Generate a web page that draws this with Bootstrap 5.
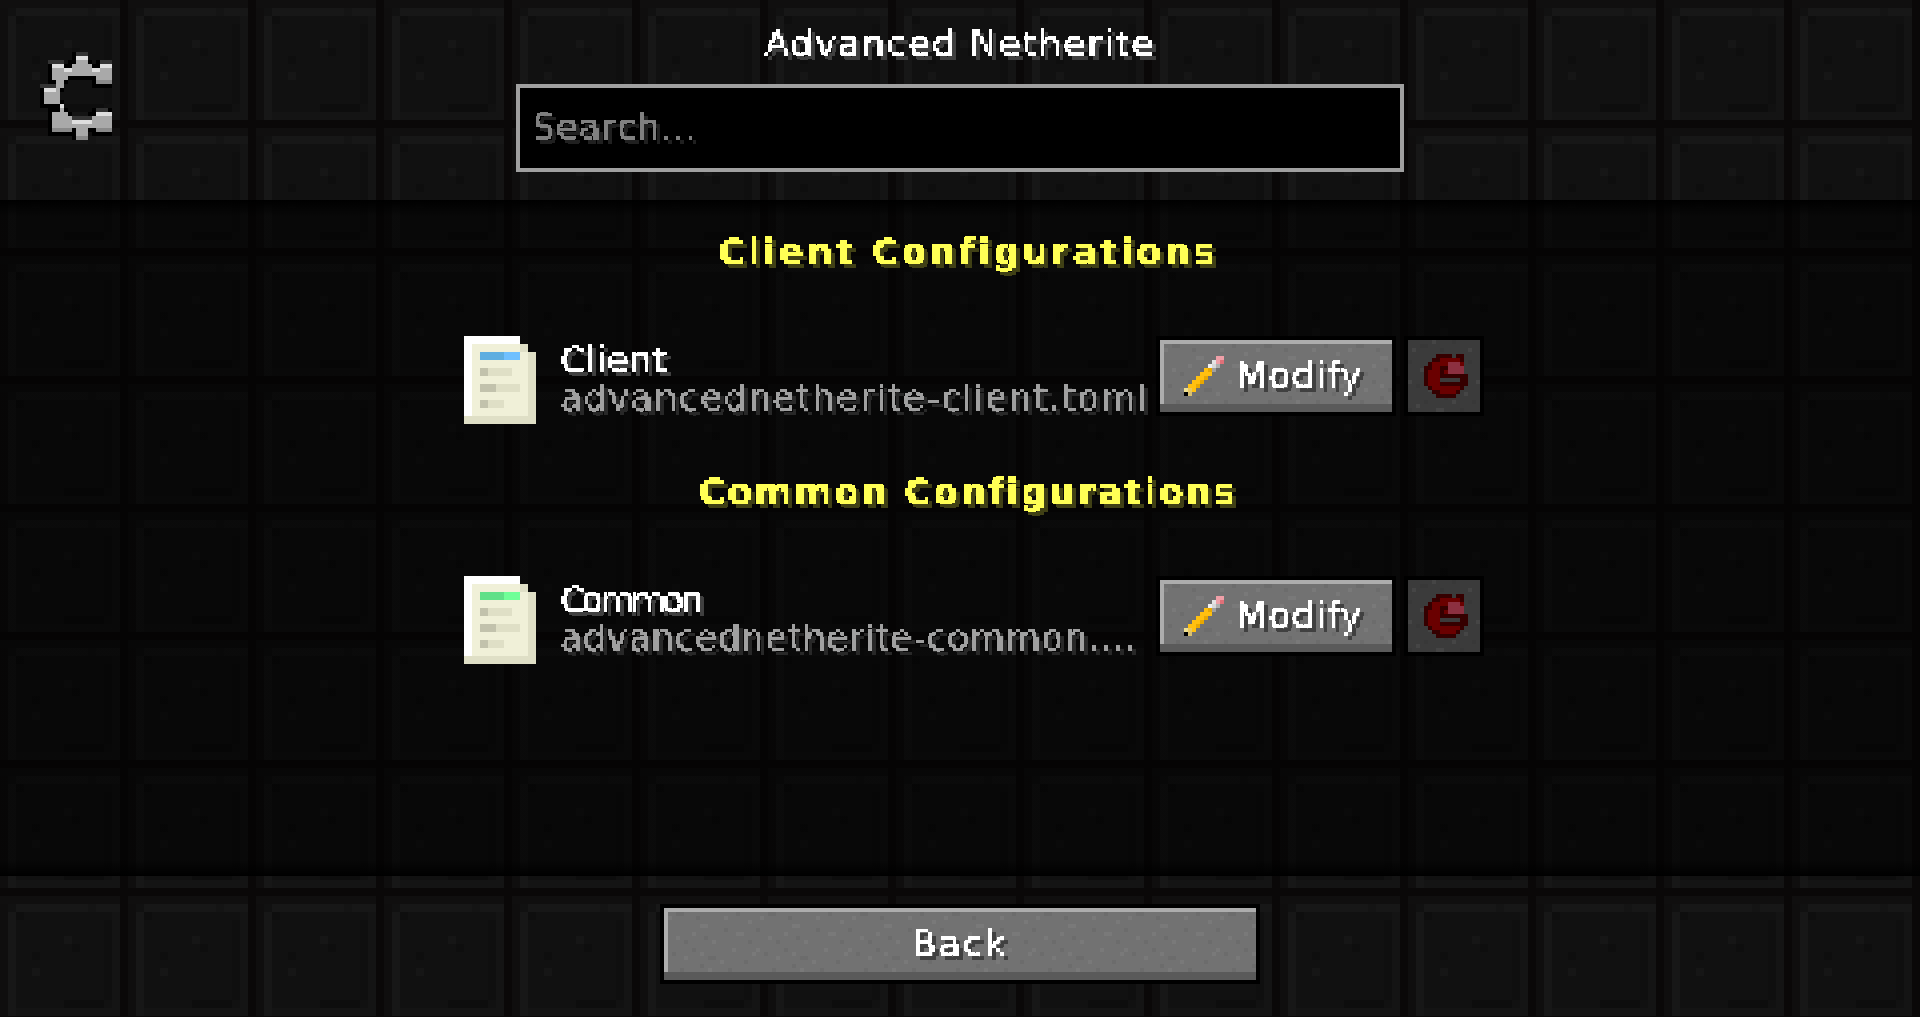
<!DOCTYPE html>
<html lang="en">
<head>
<meta charset="utf-8">
<title>Advanced Netherite</title>
<link href="https://cdn.jsdelivr.net/npm/bootstrap@5.3.0/dist/css/bootstrap.min.css" rel="stylesheet">
<style>
html,body{height:100%;overflow:hidden}
body{
  background-color:#111;
  background-image:url("data:image/svg+xml,%3Csvg xmlns='http://www.w3.org/2000/svg' width='128' height='128' shape-rendering='crispEdges'%3E%3Crect width='128' height='128' fill='%23111'/%3E%3Crect width='8' height='128' fill='%230f0e0e'/%3E%3Crect width='128' height='8' fill='%23100f0f'/%3E%3Crect x='8' y='112' width='112' height='8' fill='%23141414'/%3E%3Crect x='112' y='16' width='8' height='104' fill='%23141414'/%3E%3Crect x='8' y='16' width='8' height='104' fill='%23171717'/%3E%3Crect x='16' y='8' width='104' height='8' fill='%23171717'/%3E%3Crect x='88' y='8' width='8' height='8' fill='%23141414'/%3E%3Crect x='64' y='104' width='40' height='8' fill='%230d0d0d'/%3E%3Crect x='104' y='24' width='8' height='80' fill='%230f0f0f'/%3E%3Crect x='16' y='16' width='8' height='8' fill='%230e0e0e'/%3E%3Crect x='64' y='40' width='8' height='8' fill='%23161616'/%3E%3Crect x='72' y='48' width='8' height='8' fill='%230e0e0e'/%3E%3Crect x='32' y='72' width='8' height='8' fill='%23161616'/%3E%3Crect x='32' y='56' width='8' height='8' fill='%230e0e0e'/%3E%3Crect x='120' width='8' height='128' fill='%230a0808'/%3E%3Crect y='120' width='128' height='8' fill='%230a0808'/%3E%3C/svg%3E");
  background-size:128px 128px;
  font-family:"DejaVu Sans",sans-serif;
  color:#fff;
}
.screen{height:1017px}
.px{filter:url(#pix)}
.top-band{height:200px;display:grid;grid-template-columns:516px 888px 516px}
.gear-cell{padding:52px 0 0 40px}
.gear{width:76px;height:88px;display:block}
.gear-body{filter:drop-shadow(.98px 0 0 #000) drop-shadow(-.98px 0 0 #000) drop-shadow(0 1px 0 #000) drop-shadow(0 -1px 0 #000)}
.title-line{height:84px;padding-top:24px;font-size:36px;line-height:40px;text-align:center;letter-spacing:1.8px;margin:0;font-weight:400}
.search-frame{height:88px;border:4px solid #a0a0a0;background:#000;padding:0 0 0 12px}
.search-field{display:block;width:100%;height:76px;border:0;outline:0;background:transparent;padding:0;font:36px/40px "DejaVu Sans",sans-serif;color:#e0e0e0;letter-spacing:.9px}
.search-field::placeholder{color:#808080;opacity:1}
.list-area{
  flex:1 1 auto;min-height:0;padding-left:464px;
  background:linear-gradient(#000,rgba(0,0,0,.55) 16px,rgba(0,0,0,.55) calc(100% - 16px),#000);
}
.section-box{width:1020px;height:240px}
.section-head{height:136px;padding-top:32px;margin:0;font-size:36px;line-height:40px;font-weight:700;color:#ffff55;text-align:center;padding-right:12px;letter-spacing:3.3px}
.section-head-common{letter-spacing:2.4px}
.cfg-row{height:80px}
.cfg-icon{width:72px;height:88px;flex:none;display:block}
.cfg-text{width:596px;margin-left:24px;padding-top:4px;flex:none}
.cfg-name{font-size:36px;line-height:40px;height:40px;white-space:nowrap}
.cfg-file{font-size:36px;line-height:36px;height:36px;color:#a0a0a0;white-space:nowrap}
.track-client{letter-spacing:.5px}
.track-common{letter-spacing:-3.8px}
.track-file-client{letter-spacing:1.5px}
.track-file-common{letter-spacing:.7px}
.mc-btn{
  border:4px solid #000;border-radius:0;padding:0;
  background-color:#727272;
  background-image:url("data:image/svg+xml,%3Csvg xmlns='http://www.w3.org/2000/svg' width='92' height='76' shape-rendering='crispEdges'%3E%3Cpath fill='%23fff' fill-opacity='.05' d='M4 8h4v4H4zM24 0h4v4h-4zM36 16h8v4h-8zM60 8h4v4h-4zM84 12h4v4h-4zM12 28h4v4h-4zM28 24h4v4h-4zM48 32h4v4h-4zM72 24h8v4h-8zM0 40h4v4H0zM20 48h4v4h-4zM36 44h4v4h-4zM56 52h4v4h-4zM88 44h4v4h-4zM8 64h4v4H8zM28 68h8v4h-8zM44 60h4v4h-4zM68 40h4v4h-4zM76 64h4v4h-4z'/%3E%3Cpath fill='%23000' fill-opacity='.05' d='M12 4h8v4h-8zM32 8h4v4h-4zM44 0h4v4h-4zM72 4h4v4h-4zM0 20h4v4H0zM20 32h4v4h-4zM40 28h4v4h-4zM60 20h4v4h-4zM84 32h4v4h-4zM8 44h4v4H8zM28 40h4v4h-4zM44 48h8v4h-8zM64 60h4v4h-4zM80 52h4v4h-4zM16 60h4v4h-4zM36 56h4v4h-4zM52 68h4v4h-4zM0 68h4v4H0z'/%3E%3C/svg%3E");
  color:#fff;font-size:36px;line-height:40px;
  box-shadow:inset 0 -8px 0 #5a5a5a,inset 4px 4px 0 #adadad;
  display:flex;align-items:center;
}
.mc-btn:hover,.mc-btn:active{background-color:#727272;border-color:#000;color:#fff}
.modify-btn{width:240px;height:80px;flex:none;padding-left:24px}
.pencil{width:40px;height:40px;flex:none;display:block}
.modify-label{margin-left:12px;letter-spacing:1.2px}
.del-btn,.del-btn:disabled{width:80px;height:80px;flex:none;margin-left:8px;background-color:#3b3b3b;box-shadow:none;opacity:1;border-color:#000;justify-content:center;padding-left:4px}
.del-icon{width:44px;height:44px;display:block}
.bottom-band{height:141px;padding-top:28px}
.back-btn{width:600px;height:80px;justify-content:center}
.back-label{letter-spacing:2.2px}
</style>
</head>
<body>
<svg class="position-absolute" width="0" height="0" aria-hidden="true">
  <filter id="pix" x="-4%" y="-10%" width="112%" height="130%" color-interpolation-filters="sRGB">
    <feFlood x="1" y="1" width="2" height="2" flood-color="#000"/>
    <feComposite x="0" y="0" width="4" height="4"/>
    <feTile result="grid"/>
    <feComposite in="SourceGraphic" in2="grid" operator="in"/>
    <feMorphology operator="dilate" radius="1"/>
    <feComponentTransfer result="sharp"><feFuncA type="discrete" tableValues="0 1"/></feComponentTransfer>
    <feOffset in="sharp" dx="4" dy="4"/>
    <feColorMatrix values=".25 0 0 0 0 0 .25 0 0 0 0 0 .25 0 0 0 0 0 1 0" result="drop"/>
    <feMerge><feMergeNode in="drop"/><feMergeNode in="sharp"/></feMerge>
  </filter>
</svg>

<div class="screen d-flex flex-column">
  <header class="top-band">
    <div class="gear-cell">
      <svg class="gear" viewBox="0 0 19 22" shape-rendering="crispEdges" aria-hidden="true">
        <g class="gear-body">
          <g fill="#a9a9a9"><path d="M9 2h3v1H9zM8 3h5v2H8zM3 4h3v1H3zM15 4h3v1h-3zM3 5h15v1H3zM3 6h4v1H3zM14 6h4v2h-4zM4 7h2v2H4zM4 9h1v1H4zM1 10h4v3H1zM5 14h1v1H5zM3 15h4v1H3zM3 16h5v2H3zM13 16h5v2h-5zM3 18h15v1H3zM3 19h5v1H3zM14 19h4v1h-4zM9 19h3v2H9z"/></g>
          <g fill="#8a8a8a"><path d="M9 21h3v1H9zM14 7h4v1h-4zM3 19h5v1H3zM14 19h4v1h-4z"/></g>
          <g fill="#dedede"><path d="M9 1h3v1H9zM3 3h3v1H3zM15 3h3v1h-3zM6 4h2v1H6zM13 4h2v1h-2zM1 9h3v1H1zM5 13h1v1H5zM14 15h4v1h-4zM8 17h5v1H8z"/></g>
        </g>
        <g fill="#333"><path d="M9 0h3v1H9zM2 2h4v1H2zM15 2h3v1h-3zM0 8h4v1H0zM14 14h3v1h-3zM8 16h5v1H8z"/></g>
      </svg>
    </div>
    <div>
      <h1 class="title-line"><span class="px d-block">Advanced Netherite</span></h1>
      <div class="search-frame"><input class="search-field px" type="text" placeholder="Search..." aria-label="Search"></div>
    </div>
    <div></div>
  </header>

  <main class="list-area">
    <section class="section-box">
      <h2 class="section-head"><span class="px d-block">Client Configurations</span></h2>
      <div class="cfg-row d-flex">
        <svg class="cfg-icon" viewBox="0 0 18 22" shape-rendering="crispEdges" aria-hidden="true">
          <rect width="14" height="2" fill="#fff"/><rect y="2" width="2" height="18" fill="#fff"/>
          <rect x="2" y="2" width="14" height="18" fill="#f0f0d8"/>
          <rect x="14" y="2" width="2" height="2" fill="#dfdfc6"/>
          <rect x="16" y="4" width="2" height="18" fill="#dfdfc6"/><rect y="20" width="18" height="2" fill="#dfdfc6"/>
          <rect x="4" y="4" width="6" height="2" fill="#5eaee0"/><rect x="10" y="4" width="4" height="2" fill="#6fc0ff"/>
          <rect x="4" y="8" width="8" height="2" fill="#dfdfc6"/><rect x="4" y="8" width="2" height="2" fill="#c2c2ac"/>
          <rect x="4" y="12" width="10" height="2" fill="#dfdfc6"/><rect x="4" y="12" width="4" height="2" fill="#c2c2ac"/>
          <rect x="4" y="16" width="6" height="2" fill="#dfdfc6"/><rect x="4" y="16" width="2" height="2" fill="#c2c2ac"/>
        </svg>
        <div class="cfg-text">
          <div class="cfg-name track-client px">Client</div>
          <div class="cfg-file track-file-client px">advancednetherite-client.toml</div>
        </div>
        <button class="btn mc-btn modify-btn" type="button">
          <svg class="pencil" viewBox="0 0 10 10" shape-rendering="crispEdges" aria-hidden="true">
            <rect x="8" y="0" width="2" height="1" fill="#f0a0a8"/><rect x="9" y="1" width="1" height="1" fill="#e07078"/><rect x="8" y="1" width="1" height="1" fill="#f0a0a8"/>
            <rect x="7" y="1" width="1" height="1" fill="#e4e4e4"/><rect x="6" y="2" width="1" height="1" fill="#f0f0f0"/><rect x="7" y="2" width="1" height="1" fill="#d8d8d8"/><rect x="8" y="2" width="1" height="1" fill="#b0b0b0"/><rect x="7" y="3" width="1" height="1" fill="#a0a0a0"/>
            <path fill="#ffc010" d="M5 3h2v1H5zM4 4h3v1H4zM3 5h3v1H3zM2 6h3v1H2zM1 7h3v1H1zM1 8h2v1H1z"/>
            <path fill="#e8a800" d="M6 3h1v1H6zM5 5h1v1H5zM4 6h1v1H4zM3 7h1v1H3z"/>
            <rect x="0" y="8" width="1" height="1" fill="#f0e090"/><rect x="1" y="8" width="1" height="1" fill="#e8c860"/><rect x="1" y="9" width="1" height="1" fill="#d8c070"/><rect x="0" y="9" width="1" height="1" fill="#000"/>
          </svg>
          <span class="modify-label px">Modify</span>
        </button>
        <button class="btn mc-btn del-btn" type="button" disabled aria-label="Reset">
          <svg class="del-icon" viewBox="0 0 11 11" shape-rendering="crispEdges" aria-hidden="true">
            <path fill="#350000" d="M3 0h4v1H3zM8 0h2v1H8zM2 1h2v1H2zM9 1h1v1H9zM1 2h1v1H1zM0 3h2v1H0zM0 4h1v4H0zM4 3h2v1H4zM4 4h1v1H4zM4 5h5v1H4zM9 5h2v1H9zM1 8h2v1H1zM2 9h2v1H2zM8 9h1v1H8zM3 10h5v1H3zM9 8h1v1H9zM9 6h2v2H9zM4 7h5v1H4z"/>
            <path fill="#6a0000" d="M4 1h5v1H4zM2 2h4v1H2zM2 3h2v1H2zM1 4h3v4H1zM2 8h7v1H2zM4 9h4v1H4zM5 4h1v1H5zM9 2h1v1H9z"/>
            <path fill="#8c3040" d="M6 2h3v1H6zM6 3h4v2H6z"/>
            <path fill="#3b3b3b" d="M5 6h4v1H5z"/>
          </svg>
        </button>
      </div>
    </section>

    <section class="section-box">
      <h2 class="section-head section-head-common"><span class="px d-block">Common Configurations</span></h2>
      <div class="cfg-row d-flex">
        <svg class="cfg-icon" viewBox="0 0 18 22" shape-rendering="crispEdges" aria-hidden="true">
          <rect width="14" height="2" fill="#fff"/><rect y="2" width="2" height="18" fill="#fff"/>
          <rect x="2" y="2" width="14" height="18" fill="#f0f0d8"/>
          <rect x="14" y="2" width="2" height="2" fill="#dfdfc6"/>
          <rect x="16" y="4" width="2" height="18" fill="#dfdfc6"/><rect y="20" width="18" height="2" fill="#dfdfc6"/>
          <rect x="4" y="4" width="6" height="2" fill="#60e088"/><rect x="10" y="4" width="4" height="2" fill="#70ff98"/>
          <rect x="4" y="8" width="8" height="2" fill="#dfdfc6"/><rect x="4" y="8" width="2" height="2" fill="#c2c2ac"/>
          <rect x="4" y="12" width="10" height="2" fill="#dfdfc6"/><rect x="4" y="12" width="4" height="2" fill="#c2c2ac"/>
          <rect x="4" y="16" width="6" height="2" fill="#dfdfc6"/><rect x="4" y="16" width="2" height="2" fill="#c2c2ac"/>
        </svg>
        <div class="cfg-text">
          <div class="cfg-name track-common px">Common</div>
          <div class="cfg-file track-file-common px">advancednetherite-common....</div>
        </div>
        <button class="btn mc-btn modify-btn" type="button">
          <svg class="pencil" viewBox="0 0 10 10" shape-rendering="crispEdges" aria-hidden="true">
            <rect x="8" y="0" width="2" height="1" fill="#f0a0a8"/><rect x="9" y="1" width="1" height="1" fill="#e07078"/><rect x="8" y="1" width="1" height="1" fill="#f0a0a8"/>
            <rect x="7" y="1" width="1" height="1" fill="#e4e4e4"/><rect x="6" y="2" width="1" height="1" fill="#f0f0f0"/><rect x="7" y="2" width="1" height="1" fill="#d8d8d8"/><rect x="8" y="2" width="1" height="1" fill="#b0b0b0"/><rect x="7" y="3" width="1" height="1" fill="#a0a0a0"/>
            <path fill="#ffc010" d="M5 3h2v1H5zM4 4h3v1H4zM3 5h3v1H3zM2 6h3v1H2zM1 7h3v1H1zM1 8h2v1H1z"/>
            <path fill="#e8a800" d="M6 3h1v1H6zM5 5h1v1H5zM4 6h1v1H4zM3 7h1v1H3z"/>
            <rect x="0" y="8" width="1" height="1" fill="#f0e090"/><rect x="1" y="8" width="1" height="1" fill="#e8c860"/><rect x="1" y="9" width="1" height="1" fill="#d8c070"/><rect x="0" y="9" width="1" height="1" fill="#000"/>
          </svg>
          <span class="modify-label px">Modify</span>
        </button>
        <button class="btn mc-btn del-btn" type="button" disabled aria-label="Reset">
          <svg class="del-icon" viewBox="0 0 11 11" shape-rendering="crispEdges" aria-hidden="true">
            <path fill="#350000" d="M3 0h4v1H3zM8 0h2v1H8zM2 1h2v1H2zM9 1h1v1H9zM1 2h1v1H1zM0 3h2v1H0zM0 4h1v4H0zM4 3h2v1H4zM4 4h1v1H4zM4 5h5v1H4zM9 5h2v1H9zM1 8h2v1H1zM2 9h2v1H2zM8 9h1v1H8zM3 10h5v1H3zM9 8h1v1H9zM9 6h2v2H9zM4 7h5v1H4z"/>
            <path fill="#6a0000" d="M4 1h5v1H4zM2 2h4v1H2zM2 3h2v1H2zM1 4h3v4H1zM2 8h7v1H2zM4 9h4v1H4zM5 4h1v1H5zM9 2h1v1H9z"/>
            <path fill="#8c3040" d="M6 2h3v1H6zM6 3h4v2H6z"/>
            <path fill="#3b3b3b" d="M5 6h4v1H5z"/>
          </svg>
        </button>
      </div>
    </section>
  </main>

  <footer class="bottom-band d-flex justify-content-center align-items-start">
    <button class="btn mc-btn back-btn" type="button"><span class="back-label px">Back</span></button>
  </footer>
</div>
</body>
</html>
